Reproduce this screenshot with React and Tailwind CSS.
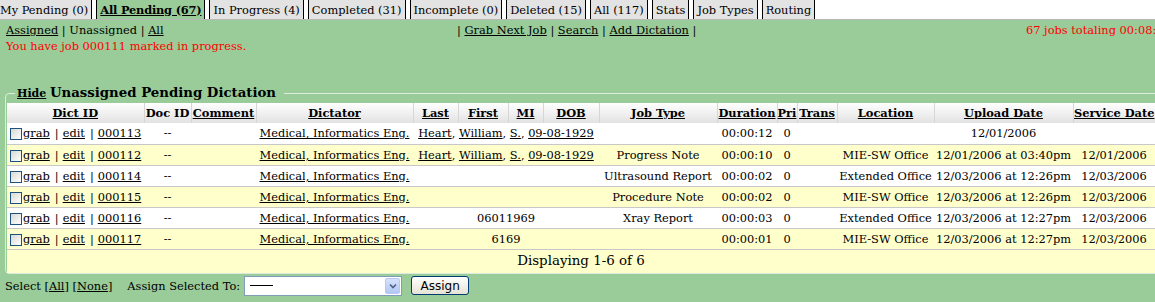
const tabs = [
  { label: "My Pending (0)", first: true },
  { label: "All Pending (67)", active: true },
  { label: "In Progress (4)" },
  { label: "Completed (31)" },
  { label: "Incomplete (0)" },
  { label: "Deleted (15)" },
  { label: "All (117)" },
  { label: "Stats" },
  { label: "Job Types" },
  { label: "Routing" },
];

const cols = [
  ["Dict ID", 137],
  ["Doc ID", 47, true],
  ["Comment", 65],
  ["Dictator", 157],
  ["Last", 45],
  ["First", 50],
  ["MI", 35],
  ["DOB", 56],
  ["Job Type", 118],
  ["Duration", 60],
  ["Pri", 20],
  ["Trans", 40],
  ["Location", 97],
  ["Upload Date", 139],
  ["Service Date", 82],
];

const rows = [
  { id: "000113", pt: "heart", job: "", dur: "00:00:12", loc: "", up: "12/01/2006", svc: "" },
  { id: "000112", pt: "heart", job: "Progress Note", dur: "00:00:10", loc: "MIE-SW Office", up: "12/01/2006 at 03:40pm", svc: "12/01/2006" },
  { id: "000114", pt: "", job: "Ultrasound Report", dur: "00:00:02", loc: "Extended Office", up: "12/03/2006 at 12:26pm", svc: "12/03/2006" },
  { id: "000115", pt: "", job: "Procedure Note", dur: "00:00:02", loc: "MIE-SW Office", up: "12/03/2006 at 12:26pm", svc: "12/03/2006" },
  { id: "000116", pt: "06011969", job: "Xray Report", dur: "00:00:03", loc: "Extended Office", up: "12/03/2006 at 12:27pm", svc: "12/03/2006" },
  { id: "000117", pt: "6169", job: "", dur: "00:00:01", loc: "MIE-SW Office", up: "12/03/2006 at 12:27pm", svc: "12/03/2006" },
];

function Patient({ pt }) {
  if (pt === "heart") {
    return (
      <>
        <span className="underline">Heart</span>, <span className="underline">William</span>,{" "}
        <span className="underline">S.</span>, <span className="underline">09-08-1929</span>
      </>
    );
  }
  return pt;
}

function Pipe() {
  return <span className="ml-[5px] mr-[4px]">|</span>;
}

export default function App() {
  return (
    <div className="w-[1155px] h-[302px] overflow-hidden bg-[#99cc99] font-['DejaVu_Serif',serif] text-[11.4px] leading-[16px] text-black">
      {/* Tabs */}
      <div className="flex gap-[4px] h-[20px] bg-white border-b border-[#b8b8b8] whitespace-nowrap">
        {tabs.map((t) => (
          <div
            key={t.label}
            className={
              "h-[19px] flex items-center border-r border-black " +
              (t.first ? "pr-[3px] " : "border-l px-[3px] ") +
              (t.active ? "bg-[#99cc99] font-bold underline tracking-[-0.2px]" : "bg-[#e3e3e3]")
            }
          >
            {t.label}
          </div>
        ))}
      </div>

      {/* Sub nav */}
      <div className="flex pt-[2px] pl-[6px] whitespace-nowrap">
        <div className="w-[451px] shrink-0">
          <span className="underline">Assigned</span> | Unassigned | <span className="underline">All</span>
        </div>
        <div className="w-[569px] shrink-0">
          | <span className="underline">Grab Next Job</span> | <span className="underline">Search</span> |{" "}
          <span className="underline">Add Dictation</span> |
        </div>
        <div className="text-[#ff0000]">67 jobs totaling 00:08:</div>
      </div>
      <div className="pl-[6px] text-[#ff0000]">You have job 000111 marked in progress.</div>

      {/* Fieldset */}
      <fieldset className="mt-[30px] ml-[5px] w-[1170px] border border-[#dcecdc] rounded-[4px] px-[1px] pt-0 pb-0">
        <legend className="ml-[8px] pl-[2px] pr-[8px] leading-[18px] whitespace-nowrap">
          <span className="font-bold underline text-[11px]">Hide</span>{" "}
          <span className="font-bold text-[13.3px]">Unassigned Pending Dictation</span>
        </legend>
        <table className="table-fixed border-collapse w-[1148px] whitespace-nowrap">
          <colgroup>
            {cols.map(([n, w]) => (
              <col key={n} style={{ width: w }} />
            ))}
          </colgroup>
          <thead>
            <tr className="h-[20px] bg-gradient-to-b from-white to-[#e2e2e2]">
              {cols.map(([n, , plain], i) => (
                <th
                  key={n}
                  className={
                    "p-0 text-center font-bold " +
                    (i > 0 ? "border-l border-[#d6d6d6] " : "") +
                    (plain ? "" : "underline")
                  }
                >
                  {n}
                </th>
              ))}
            </tr>
          </thead>
          <tbody>
            {rows.map((r, i) => (
              <tr
                key={r.id}
                className={"h-[21px] border-b border-[#c8c8c8] " + (i % 2 ? "bg-[#ffffcc]" : "bg-white")}
              >
                <td className="p-0 pl-[3px] text-left">
                  <span className="inline-block w-[12px] h-[12px] border border-[#1c5180] bg-gradient-to-br from-[#d8d8d2] to-white align-[-3px] mr-[1px]" />
                  <span className="underline">grab</span>
                  <Pipe />
                  <span className="underline">edit</span>
                  <Pipe />
                  <span className="underline">{r.id}</span>
                </td>
                <td className="p-0 text-center">--</td>
                <td className="p-0" />
                <td className="p-0 text-center">
                  <span className="underline">Medical, Informatics Eng.</span>
                </td>
                <td className="p-0 text-center" colSpan={4}>
                  <Patient pt={r.pt} />
                </td>
                <td className="p-0 text-center">{r.job}</td>
                <td className="p-0 text-center">{r.dur}</td>
                <td className="p-0 text-center">0</td>
                <td className="p-0" />
                <td className="p-0 text-center">{r.loc}</td>
                <td className="p-0 text-center">{r.up}</td>
                <td className="p-0 text-center">{r.svc}</td>
              </tr>
            ))}
            <tr className="h-[24px] bg-[#ffffcc]">
              <td colSpan={15} className="p-0 text-center text-[13.4px]">
                Displaying 1-6 of 6
              </td>
            </tr>
          </tbody>
        </table>
      </fieldset>

      {/* Bottom controls */}
      <div className="flex items-center mt-[1px] pl-[5px] h-[21px] whitespace-nowrap">
        <span>
          Select [<span className="underline">All</span>] [<span className="underline">None</span>]
        </span>
        <span className="ml-[15px]">Assign Selected To:</span>
        <div className="ml-[4px] w-[158px] h-[20px] border border-[#7f9db9] bg-white flex items-center justify-between pl-[5px] pr-[1px]">
          <span className="block w-[23px] h-px bg-black" />
          <span className="w-[15px] h-[16px] rounded-[2px] border border-[#b6c9f0] bg-gradient-to-b from-[#d6e2fc] to-[#b3c6f4] flex items-center justify-center">
            <svg width="8" height="6" viewBox="0 0 8 6">
              <path d="M1 1.5 L4 4.5 L7 1.5" fill="none" stroke="#4d6185" strokeWidth="1.6" />
            </svg>
          </span>
        </div>
        <div className="ml-[9px] w-[58px] h-[19px] rounded-[3px] border border-[#003c74] bg-gradient-to-b from-white to-[#e6e3d6] flex items-center justify-center font-['DejaVu_Sans',sans-serif] text-[12px]">
          Assign
        </div>
      </div>
    </div>
  );
}
